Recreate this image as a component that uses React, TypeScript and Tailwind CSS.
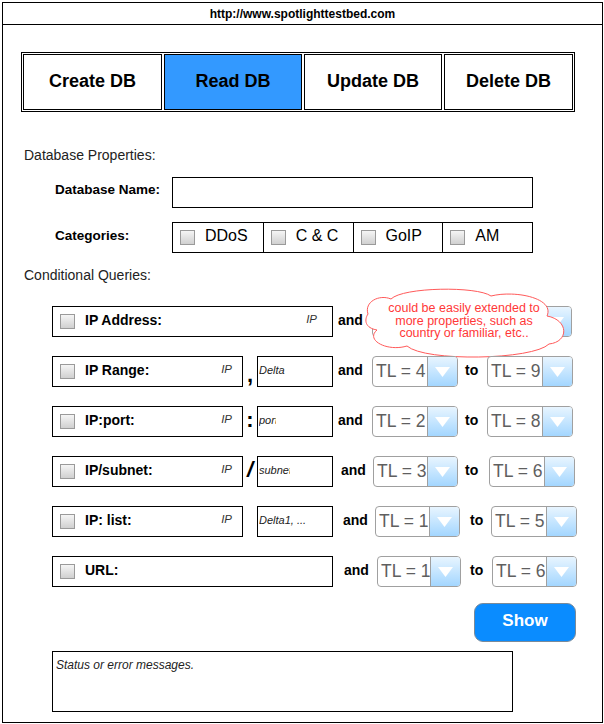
import React from 'react';

const Checkbox: React.FC = () => (
  <span className="block w-[15px] h-[15px] shrink-0 border border-[#9a9a9a] bg-linear-to-b from-[#f5f5f5] to-[#d0d0d0]" />
);

const Dropdown: React.FC<{ value?: string; className: string }> = ({ value, className }) => (
  <div className={`flex h-[31px] overflow-hidden rounded-[4px] border border-[#a0a0a0] bg-white ${className}`}>
    <div className="flex flex-1 items-center pl-[3px] text-[17.5px] text-[#5f5f5f] whitespace-nowrap">{value}</div>
    <div className="flex w-[30px] items-center justify-center border-l border-[#a0a0a0] bg-linear-to-b from-[#e8f5ff] to-[#a3d6ff]">
      <svg width="15" height="10" viewBox="0 0 15 10">
        <path d="M0 0 L15 0 L7.5 10 Z" fill="#ffffff" />
      </svg>
    </div>
  </div>
);

const Cloud: React.FC = () => (
  <div className="absolute left-[313px] top-[-16px] w-[202px] h-[68px]">
    <svg className="absolute inset-0 overflow-visible" width="202" height="68" viewBox="0 0 202 68">
      <path
        d="M3 24 C-1 12, 14 4, 26 9 C38 -3, 112 -4, 126 6 C150 0, 190 8, 182 26 C204 30, 204 52, 184 54 C168 70, 60 72, 42 56 C22 62, 0 50, 12 40 C0 38, -1 30, 3 24 Z"
        fill="#ffffff"
        stroke="#ff5a5a"
        strokeWidth="1"
      />
    </svg>
    <div className="absolute inset-0 flex flex-col items-center justify-center pb-[6px] pr-[4px] text-[12.5px] leading-[12.5px] text-[#ff3838]">
      <span>could be easily extended to</span>
      <span>more properties, such as</span>
      <span>country or familiar, etc..</span>
    </div>
  </div>
);

interface RowProps {
  label: string;
  ip?: boolean;
  ipPad?: string;
  sep?: string;
  second?: string;
  secondClip?: string;
  wide?: boolean;
  andCls: string;
  dd1Cls: string;
  toCls?: string;
  dd2Cls?: string;
  from?: string;
  to?: string;
  cloud?: boolean;
}

const QueryRow: React.FC<RowProps> = ({
  label,
  ip,
  ipPad,
  sep,
  second,
  secondClip,
  wide,
  andCls,
  dd1Cls,
  toCls,
  dd2Cls,
  from,
  to,
  cloud,
}) => (
  <div className="relative flex h-[31px] items-center">
    <div className={`flex h-[31px] items-center border border-black ${wide ? 'w-[281px]' : 'w-[191px]'}`}>
      <span className="ml-[7px]">
        <Checkbox />
      </span>
      <span className="ml-[10px] pb-[2px] text-[14px] font-bold text-black">{label}</span>
      {ip && <span className={`ml-auto pb-[3px] text-[11.5px] italic text-[#333] ${ipPad}`}>IP</span>}
    </div>
    {!wide && (
      <>
        <div className="flex w-[14px] justify-center">
          {sep === ',' && <span className="pt-[6px] text-[22px] font-bold leading-[22px]">,</span>}
          {sep === ':' && <span className="pb-[4px] text-[22px] font-bold leading-[22px]">:</span>}
          {sep === '/' && <span className="pb-[4px] text-[22px] font-bold italic leading-[22px]">/</span>}
        </div>
        <div className="flex h-[31px] w-[76px] items-center border border-black pl-[1px]">
          <span className={`shrink-0 overflow-hidden whitespace-nowrap pb-[3px] text-[11px] italic text-[#222] ${secondClip ?? ''}`}>
            {second}
          </span>
        </div>
      </>
    )}
    <span className={`pb-[2px] text-[14px] font-bold text-black ${andCls}`}>and</span>
    <Dropdown value={from} className={dd1Cls} />
    {toCls && (
      <>
        <span className={`pb-[2px] text-[14px] font-bold text-black ${toCls}`}>to</span>
        <Dropdown value={to} className={dd2Cls ?? ''} />
      </>
    )}
    {cloud && <Cloud />}
  </div>
);

const tabs = ['Create DB', 'Read DB', 'Update DB', 'Delete DB'];
const tabWidths = ['w-[139px]', 'w-[138px]', 'w-[138px]', 'w-[129px]'];
const categories = ['DDoS', 'C & C', 'GoIP', 'AM'];

export default function App() {
  return (
    <div className="w-[604px] h-[724px] bg-white pl-[2px] pt-[2px] font-['Liberation_Sans',Arial,sans-serif] text-black">
      <div className="flex h-[721px] w-[601px] flex-col border border-black">
        <div className="flex h-[22px] shrink-0 items-center justify-center border-b border-black text-[12px] font-bold">
          http://www.spotlighttestbed.com
        </div>

        {/* CRUD tabs */}
        <div className="ml-[18px] mt-[27px] flex h-[60px] w-[554px] gap-[2px] border border-black p-[1px]">
          {tabs.map((t, i) => (
            <div
              key={t}
              className={`flex items-center justify-center border border-black pb-[2px] text-[18px] font-bold ${tabWidths[i]} ${
                i === 1 ? 'bg-[#3399ff]' : 'bg-white'
              }`}
            >
              {t}
            </div>
          ))}
        </div>

        <div className="ml-[21px] mt-[35px] text-[14px] leading-[16px] text-[#222]">Database Properties:</div>

        <div className="mt-[14px] flex h-[31px] items-center">
          <span className="ml-[52px] w-[117px] pb-[4px] text-[13.5px] font-bold">Database Name:</span>
          <div className="h-[31px] w-[361px] border border-black" />
        </div>

        <div className="mt-[14px] flex h-[31px] items-center">
          <span className="ml-[52px] w-[117px] pb-[2px] text-[13.5px] font-bold">Categories:</span>
          <div className="flex h-[31px] w-[361px] border border-black">
            {categories.map((c, i) => (
              <div
                key={c}
                className={`flex h-full w-[90px] items-center ${i > 0 ? 'border-l border-black' : ''}`}
              >
                <span className="ml-[7px]">
                  <Checkbox />
                </span>
                <span className="ml-[10px] pb-[3px] text-[16px]">{c}</span>
              </div>
            ))}
          </div>
        </div>

        <div className="ml-[21px] mt-[14px] text-[14px] leading-[16px] text-[#222]">Conditional Queries:</div>

        <div className="ml-[49px] mt-[23px] flex flex-col gap-[19px]">
          <QueryRow
            label="IP Address:"
            ip
            ipPad="mr-[15px]"
            wide
            andCls="ml-[5px] w-[34px]"
            dd1Cls="w-[200px]"
            cloud
          />
          <QueryRow
            label="IP Range:"
            ip
            ipPad="mr-[10px]"
            sep=","
            second="Delta"
            andCls="ml-[5px] w-[34px]"
            dd1Cls="w-[86px]"
            from="TL = 4"
            toCls="ml-[7px] w-[22px]"
            dd2Cls="w-[86px]"
            to="TL = 9"
          />
          <QueryRow
            label="IP:port:"
            ip
            ipPad="mr-[10px]"
            sep=":"
            second="port"
            secondClip="w-[17px]"
            andCls="ml-[5px] w-[34px]"
            dd1Cls="w-[86px]"
            from="TL = 2"
            toCls="ml-[7px] w-[22px]"
            dd2Cls="w-[86px]"
            to="TL = 8"
          />
          <QueryRow
            label="IP/subnet:"
            ip
            ipPad="mr-[10px]"
            sep="/"
            second="subnet"
            secondClip="w-[31px]"
            andCls="ml-[8px] w-[32px]"
            dd1Cls="w-[85px]"
            from="TL = 3"
            toCls="ml-[7px] w-[24px]"
            dd2Cls="w-[86px]"
            to="TL = 6"
          />
          <QueryRow
            label="IP: list:"
            ip
            ipPad="mr-[10px]"
            second="Delta1, ..."
            andCls="ml-[10px] w-[32px]"
            dd1Cls="w-[85px]"
            from="TL = 1"
            toCls="ml-[10px] w-[21px]"
            dd2Cls="w-[86px]"
            to="TL = 5"
          />
          <QueryRow
            label="URL:"
            wide
            andCls="ml-[11px] w-[33px]"
            dd1Cls="w-[84px]"
            from="TL = 1"
            toCls="ml-[9px] w-[22px]"
            dd2Cls="w-[85px]"
            to="TL = 6"
          />
        </div>

        <button className="ml-[471px] mt-[16px] flex h-[39px] w-[102px] items-center justify-center rounded-[9px] border border-[#7a8a99] bg-[#0a8cff] pb-[3px] text-[17px] font-bold text-white">
          Show
        </button>

        <div className="ml-[49px] mt-[9px] h-[61px] w-[461px] border border-black pl-[3px] pt-[4px] text-[12px] italic text-[#222]">
          Status or error messages.
        </div>
      </div>
    </div>
  );
}
